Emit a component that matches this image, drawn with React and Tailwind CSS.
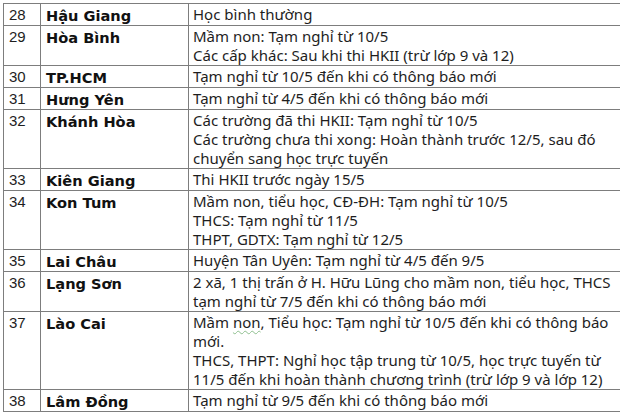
import React from "react";

const rows = [
  { no: "28", name: "Hậu Giang", lines: ["Học bình thường"] },
  {
    no: "29",
    name: "Hòa Bình",
    lines: ["Mầm non: Tạm nghỉ từ 10/5", "Các cấp khác: Sau khi thi HKII (trừ lớp 9 và 12)"],
  },
  { no: "30", name: "TP.HCM", lines: ["Tạm nghỉ từ 10/5 đến khi có thông báo mới"] },
  { no: "31", name: "Hưng Yên", lines: ["Tạm nghỉ từ 4/5 đến khi có thông báo mới"] },
  {
    no: "32",
    name: "Khánh Hòa",
    lines: [
      "Các trường đã thi HKII: Tạm nghỉ từ 10/5",
      "Các trường chưa thi xong: Hoàn thành trước 12/5, sau đó",
      "chuyển sang học trực tuyến",
    ],
  },
  { no: "33", name: "Kiên Giang", lines: ["Thi HKII trước ngày 15/5"] },
  {
    no: "34",
    name: "Kon Tum",
    lines: [
      "Mầm non, tiểu học, CĐ-ĐH: Tạm nghỉ từ 10/5",
      "THCS: Tạm nghỉ từ 11/5",
      "THPT, GDTX: Tạm nghỉ từ 12/5",
    ],
  },
  { no: "35", name: "Lai Châu", lines: ["Huyện Tân Uyên: Tạm nghỉ từ 4/5 đến 9/5"] },
  {
    no: "36",
    name: "Lạng Sơn",
    lines: [
      "2 xã, 1 thị trấn ở H. Hữu Lũng cho mầm non, tiểu học, THCS",
      "tạm nghỉ từ 7/5 đến khi có thông báo mới",
    ],
  },
  {
    no: "37",
    name: "Lào Cai",
    lines: [
      <>
        Mầm{" "}
        <span className="underline decoration-wavy decoration-[#8fbf8f] decoration-1 underline-offset-2">
          non
        </span>
        , Tiểu học: Tạm nghỉ từ 10/5 đến khi có thông báo
      </>,
      "mới.",
      "THCS, THPT: Nghỉ học tập trung từ 10/5, học trực tuyến từ",
      "11/5 đến khi hoàn thành chương trình (trừ lớp 9 và lớp 12)",
    ],
  },
  { no: "38", name: "Lâm Đồng", lines: ["Tạm nghỉ từ 9/5 đến khi có thông báo mới"] },
];

function Row({ no, name, lines }) {
  return (
    <tr className="align-top">
      <td className="border border-[#7d7d7d] pl-[5px] pt-px text-[15px] leading-[19px] text-[#1e1e1e] font-['Liberation_Sans',sans-serif]">
        {no}
      </td>
      <td className="border border-[#7d7d7d] pl-[5px] pt-[2px] text-[14.6px] leading-[19px] font-bold text-[#111] font-['DejaVu_Sans',sans-serif]">
        {name}
      </td>
      <td className="border border-[#7d7d7d] pl-[4px] pt-px text-[15px] leading-[19px] text-[#1e1e1e] font-['Noto_Sans',sans-serif] whitespace-nowrap">
        {lines.map((line, i) => (
          <div key={i}>{line}</div>
        ))}
      </td>
    </tr>
  );
}

export default function App() {
  return (
    <div className="w-[620px] h-[415px] bg-white overflow-hidden">
      <table className="border-collapse mt-[3px] ml-[3px] w-[660px] table-fixed">
        <colgroup>
          <col className="w-[37px]" />
          <col className="w-[148px]" />
          <col />
        </colgroup>
        <tbody>
          {rows.map((r) => (
            <Row key={r.no} {...r} />
          ))}
        </tbody>
      </table>
    </div>
  );
}
